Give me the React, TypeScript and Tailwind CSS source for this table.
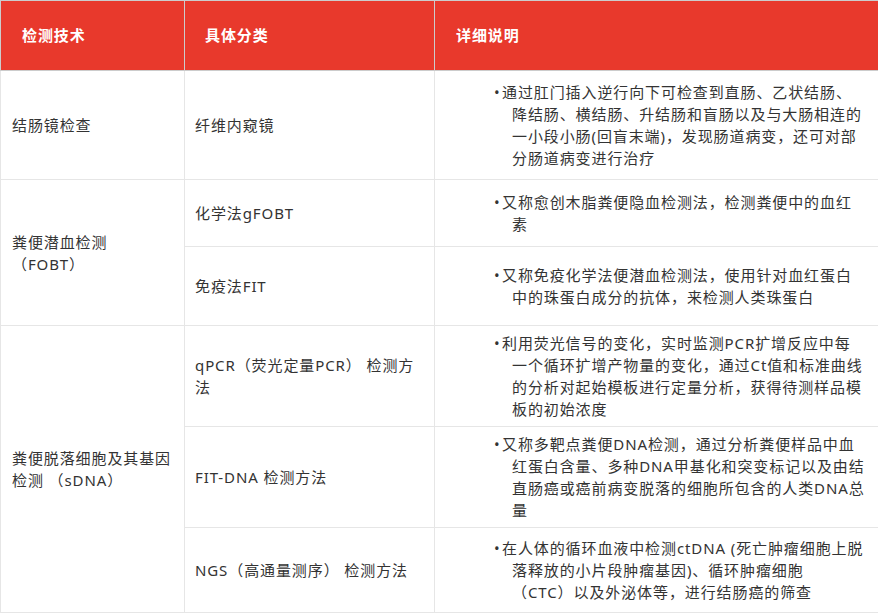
import React from 'react'

const FONT = '"Noto Sans", "Noto Sans CJK SC", sans-serif'

// explicit lines keep the wrap identical to the source table
function Bullet({ lines }: { lines: string[] }) {
  return (
    <div className="pl-[59px] text-[15px] leading-[22px] text-[#333] whitespace-nowrap">
      {lines.map((l, i) =>
        i === 0 ? (
          <div key={i}>
            <span className="inline-block w-[8px] tracking-normal">•</span>
            {l}
          </div>
        ) : (
          <div key={i} className="pl-[18px]">
            {l}
          </div>
        )
      )}
    </div>
  )
}

function Lines({ lines }: { lines: string[] }) {
  return (
    <div className="text-[15px] leading-[22px] text-[#333] whitespace-nowrap">
      {lines.map((l, i) => (
        <div key={i}>{l}</div>
      ))}
    </div>
  )
}

const td = 'border border-[#e6e6e6] align-middle p-0'

export default function App() {
  return (
    <div className="w-[878px] h-[613px] bg-white" style={{ fontFamily: FONT }}>
      <table className="table-fixed border-collapse w-[878px] tracking-[0.9px]">
        <colgroup>
          <col className="w-[184px]" />
          <col className="w-[250px]" />
          <col className="w-[444px]" />
        </colgroup>
        <thead>
          <tr className="h-[70px] bg-[#e8392c] text-white text-[15px] font-bold text-left">
            <th className="border border-[#cccccc] pl-[21px] font-bold">检测技术</th>
            <th className="border border-[#cccccc] pl-[20px] font-bold">具体分类</th>
            <th className="border border-[#cccccc] pl-[21px] font-bold">详细说明</th>
          </tr>
        </thead>
        <tbody>
          <tr className="h-[109px]">
            <td className={`${td} pl-[11px]`}>
              <Lines lines={['结肠镜检查']} />
            </td>
            <td className={`${td} pl-[10px]`}>
              <Lines lines={['纤维内窥镜']} />
            </td>
            <td className={td}>
              <Bullet
                lines={[
                  '通过肛门插入逆行向下可检查到直肠、乙状结肠、',
                  '降结肠、横结肠、升结肠和盲肠以及与大肠相连的',
                  '一小段小肠(回盲末端)，发现肠道病变，还可对部',
                  '分肠道病变进行治疗',
                ]}
              />
            </td>
          </tr>
          <tr className="h-[67px]">
            <td rowSpan={2} className={`${td} pl-[11px]`}>
              <Lines lines={['粪便潜血检测', '（FOBT）']} />
            </td>
            <td className={`${td} pl-[10px]`}>
              <Lines lines={['化学法gFOBT']} />
            </td>
            <td className={td}>
              <Bullet lines={['又称愈创木脂粪便隐血检测法，检测粪便中的血红', '素']} />
            </td>
          </tr>
          <tr className="h-[79px]">
            <td className={`${td} pl-[10px]`}>
              <Lines lines={['免疫法FIT']} />
            </td>
            <td className={td}>
              <Bullet lines={['又称免疫化学法便潜血检测法，使用针对血红蛋白', '中的珠蛋白成分的抗体，来检测人类珠蛋白']} />
            </td>
          </tr>
          <tr className="h-[101px]">
            <td rowSpan={3} className={`${td} pl-[11px]`}>
              <Lines lines={['粪便脱落细胞及其基因', '检测 （sDNA）']} />
            </td>
            <td className={`${td} pl-[10px]`}>
              <Lines lines={['qPCR（荧光定量PCR） 检测方', '法']} />
            </td>
            <td className={td}>
              <Bullet
                lines={[
                  '利用荧光信号的变化，实时监测PCR扩增反应中每',
                  '一个循环扩增产物量的变化，通过Ct值和标准曲线',
                  '的分析对起始模板进行定量分析，获得待测样品模',
                  '板的初始浓度',
                ]}
              />
            </td>
          </tr>
          <tr className="h-[101px]">
            <td className={`${td} pl-[10px]`}>
              <Lines lines={['FIT-DNA 检测方法']} />
            </td>
            <td className={td}>
              <Bullet
                lines={[
                  '又称多靶点粪便DNA检测，通过分析粪便样品中血',
                  '红蛋白含量、多种DNA甲基化和突变标记以及由结',
                  '直肠癌或癌前病变脱落的细胞所包含的人类DNA总',
                  '量',
                ]}
              />
            </td>
          </tr>
          <tr className="h-[85px]">
            <td className={`${td} pl-[10px]`}>
              <Lines lines={['NGS（高通量测序） 检测方法']} />
            </td>
            <td className={td}>
              <Bullet
                lines={[
                  '在人体的循环血液中检测ctDNA (死亡肿瘤细胞上脱',
                  '落释放的小片段肿瘤基因)、循环肿瘤细胞',
                  '（CTC）以及外泌体等，进行结肠癌的筛查',
                ]}
              />
            </td>
          </tr>
        </tbody>
      </table>
    </div>
  )
}
